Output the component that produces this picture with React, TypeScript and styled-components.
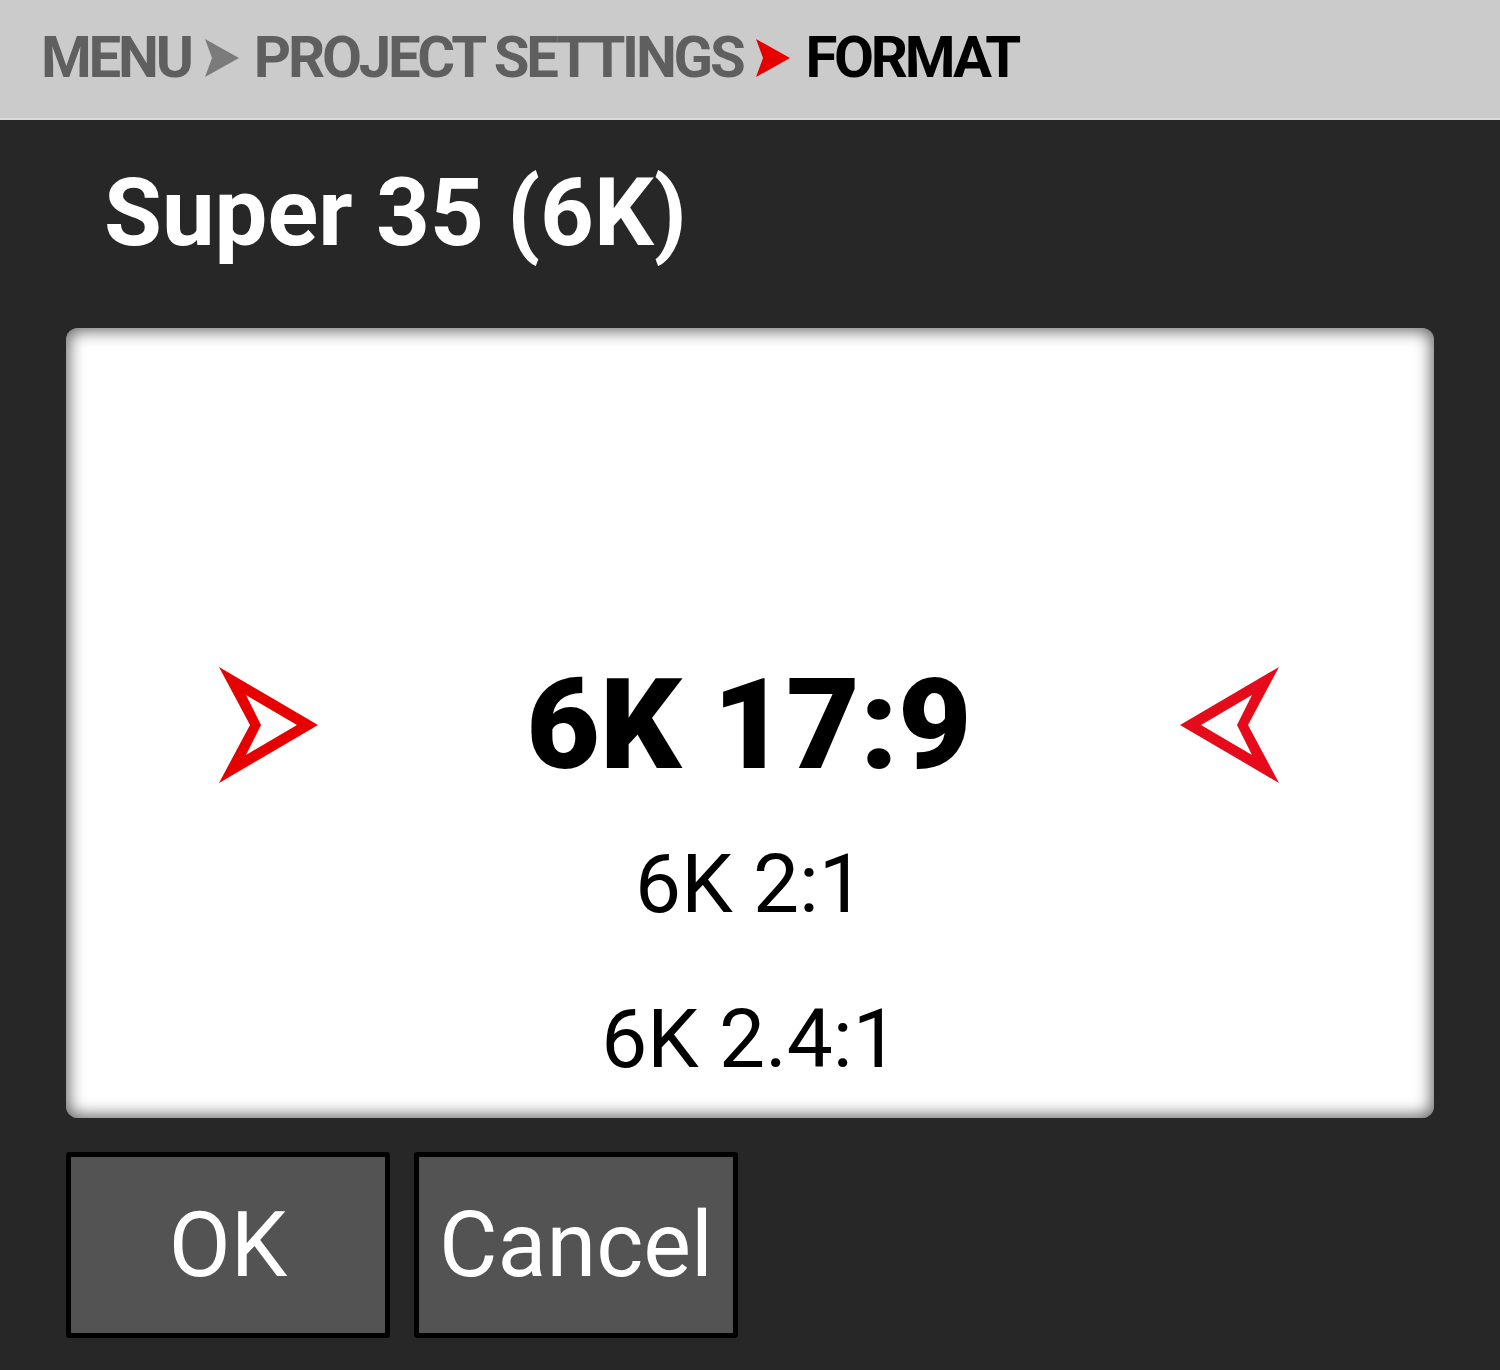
import styled, { createGlobalStyle } from "styled-components";

const GlobalStyle = createGlobalStyle`
  html, body {
    margin: 0;
    padding: 0;
    background: #272727;
  }
  body {
    font-family: Roboto, "Liberation Sans", sans-serif;
  }
`;

type Crumb = { label: string; current?: boolean };

const crumbs: Crumb[] = [
  { label: "MENU" },
  { label: "PROJECT SETTINGS" },
  { label: "FORMAT", current: true },
];

const options = [
  { label: "6K 2:1", gap: 55 },
  { label: "6K 2.4:1", gap: 73 },
];

const Chevron = ({ active }: { active?: boolean }) => (
  <ChevronSvg viewBox="0 0 34 38" $active={active}>
    <path d="M0 0 L34 19 L0 38 L7 19 Z" />
  </ChevronSvg>
);

const PointerArrow = ({ flip }: { flip?: boolean }) => (
  <ArrowSvg viewBox="0 0 100 116" $flip={flip}>
    <path
      fillRule="evenodd"
      d="M1 0 L100 58 L1 116 L32 58 Z M28 28 L79 58 L28 88 L43 58 Z"
    />
  </ArrowSvg>
);

const App = () => {
  return (
    <Screen>
      <GlobalStyle />
      <Breadcrumb>
        {crumbs.map((c, i) => (
          <CrumbGroup key={c.label}>
            {i > 0 && <Chevron active={c.current} />}
            <CrumbLabel $current={c.current}>{c.label}</CrumbLabel>
          </CrumbGroup>
        ))}
      </Breadcrumb>

      <Title>Super 35 (6K)</Title>

      <Picker>
        <SelectedRow>
          <PointerArrow />
          <SelectedValue>6K 17:9</SelectedValue>
          <PointerArrow flip />
        </SelectedRow>
        {options.map((o) => (
          <Option key={o.label} $gap={o.gap}>
            {o.label}
          </Option>
        ))}
      </Picker>

      <Actions>
        <ActionButton>OK</ActionButton>
        <ActionButton>Cancel</ActionButton>
      </Actions>
    </Screen>
  );
};

export default App;

const Screen = styled.div`
  width: 1500px;
  height: 1370px;
  background: #272727;
  overflow: hidden;
  display: flex;
  flex-direction: column;
`;

const Breadcrumb = styled.nav`
  height: 120px;
  box-sizing: border-box;
  background: #cbcbcb;
  border-bottom: 2px solid #dadada;
  display: flex;
  align-items: center;
  gap: 14px;
  padding: 0 0 4px 41px;
`;

const CrumbGroup = styled.div`
  display: flex;
  align-items: center;
  gap: 15px;
`;

const CrumbLabel = styled.span<{ $current?: boolean }>`
  font-size: 58px;
  font-weight: 700;
  line-height: 1;
  letter-spacing: -3.2px;
  color: ${({ $current }) => ($current ? "#000" : "#5f5f5f")};
`;

const ChevronSvg = styled.svg<{ $active?: boolean }>`
  width: 34px;
  height: 38px;
  margin-top: 2px;
  fill: ${({ $active }) => ($active ? "#e60000" : "#7b7b7b")};
`;

const Title = styled.h1`
  margin: 46px 0 0 104px;
  font-size: 94px;
  font-weight: 700;
  line-height: 1;
  color: #fff;
`;

const Picker = styled.section`
  margin: 68px 66px 0;
  height: 790px;
  box-sizing: border-box;
  padding-top: 333px;
  background: #fff;
  border-radius: 12px;
  box-shadow: inset 0 0 16px 3px rgba(0, 0, 0, 0.6);
  display: flex;
  flex-direction: column;
  align-items: center;
  overflow: hidden;
`;

const SelectedRow = styled.div`
  width: 100%;
  box-sizing: border-box;
  padding: 0 154px 0 152px;
  display: grid;
  grid-template-columns: 1fr auto 1fr;
  align-items: center;
  & > svg:last-child {
    justify-self: end;
  }
`;

const ArrowSvg = styled.svg<{ $flip?: boolean }>`
  width: 100px;
  height: 116px;
  fill: ${({ $flip }) => ($flip ? "#e50b1b" : "#e60000")};
  transform: ${({ $flip }) => ($flip ? "scaleX(-1)" : "none")};
`;

const SelectedValue = styled.div`
  font-size: 127px;
  font-weight: 900;
  line-height: 1;
  color: #000;
`;

const Option = styled.div<{ $gap: number }>`
  margin-top: ${({ $gap }) => $gap}px;
  font-size: 82px;
  font-weight: 400;
  line-height: 1;
  color: #000;
`;

const Actions = styled.div`
  display: flex;
  gap: 24px;
  margin: 34px 0 0 66px;
`;

const ActionButton = styled.button`
  width: 324px;
  height: 186px;
  box-sizing: border-box;
  border: 5px solid #000;
  border-radius: 3px;
  background: #535353;
  color: #fff;
  font-family: Roboto, "Liberation Sans", sans-serif;
  font-size: 90px;
  font-weight: 400;
  padding: 0;
  cursor: pointer;
`;
